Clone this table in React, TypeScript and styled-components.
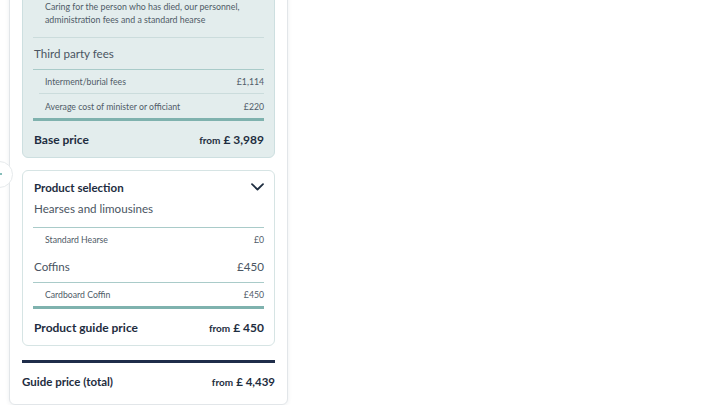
import React from 'react'
import styled, { createGlobalStyle } from 'styled-components'

const GlobalStyle = createGlobalStyle`
  html, body {
    margin: 0;
    padding: 0;
    background: #ffffff;
    overflow: hidden;
  }
  body {
    font-family: Lato, "Open Sans", sans-serif;
    color: #1e2d40;
  }
`

const UI = {
  Page: styled.div`
    position: relative;
    width: 720px;
    height: 405px;
    overflow: hidden;
  `,
  Card: styled.section`
    margin: -40px 0 0 9px;
    width: 279px;
    box-sizing: border-box;
    padding: 0 12px 4px;
    background: #fff;
    border: 1px solid #e2e6e9;
    border-radius: 6px;
    box-shadow: 0 1px 4px rgba(30, 45, 64, 0.08);
  `,
  Panel: styled.div<{ $tinted?: boolean }>`
    box-sizing: border-box;
    padding: 0 10px;
    border: 1px solid ${({ $tinted }) => ($tinted ? '#cddfe0' : '#d6e4e4')};
    border-radius: 6px;
    background: ${({ $tinted }) => ($tinted ? '#e3eded' : '#ffffff')};
    margin-bottom: 12px;
  `,
  Intro: styled.p`
    margin: 0;
    padding: 38px 0 11px 12px;
    font-size: 8.8px;
    line-height: 13px;
    color: #4f5b67;
  `,
  Row: styled.div<{ $indent?: 'inset' | 'full'; $line?: 'thin' | 'thick' | 'faint' | 'none' }>`
    display: flex;
    justify-content: space-between;
    align-items: center;
    margin-left: ${({ $indent }) => ($indent === 'inset' ? '6px' : '0')};
    padding-left: ${({ $indent }) => ($indent === 'inset' ? '6px' : $indent === 'full' ? '12px' : '1px')};
    border-top: ${({ $line }) =>
      $line === 'thick'
        ? '3px solid #7fb2ae'
        : $line === 'thin'
        ? '1.5px solid #a9cbc9'
        : $line === 'faint'
        ? '1px solid #cbdcdc'
        : 'none'};
  `,
  Heading: styled.span`
    font-size: 11.6px;
    color: #4a5562;
  `,
  Small: styled.span`
    font-size: 8.7px;
    color: #4f5b67;
  `,
  Bold: styled.span<{ $size?: number }>`
    font-size: ${({ $size }) => $size || 12}px;
    font-weight: 700;
    color: #1e2d40;
  `,
  Price: styled.span`
    display: inline-flex;
    align-items: baseline;
    gap: 3px;
  `,
  From: styled.span`
    font-size: 10px;
    font-weight: 700;
    color: #1e2d40;
  `,
  Total: styled.div`
    display: flex;
    justify-content: space-between;
    align-items: center;
    height: 37px;
    margin-top: 14px;
    border-top: 3px solid #1f2d4a;
  `,
  Toggle: styled.button`
    border: 0;
    background: none;
    padding: 0;
    width: 14px;
    height: 14px;
    display: flex;
    align-items: center;
    justify-content: center;
    color: #1e2d40;
  `,
  Nav: styled.div`
    position: absolute;
    left: -14px;
    top: 161px;
    width: 25px;
    height: 25px;
    border-radius: 50%;
    border: 1px solid #e6eaec;
    background: #fff;
    &::after {
      content: '';
      position: absolute;
      left: 13px;
      top: 11px;
      width: 2px;
      height: 2px;
      border-radius: 50%;
      background: #5fa8a3;
    }
  `
}

const Price = ({ value, size = 12 }: { value: string; size?: number }) => (
  <UI.Price>
    <UI.From>from</UI.From>
    <UI.Bold $size={size}>£ {value}</UI.Bold>
  </UI.Price>
)

const App = () => (
  <UI.Page>
    <GlobalStyle />
    <UI.Card>
      <UI.Panel $tinted>
        <UI.Intro>
          Caring for the person who has died, our personnel,
          <br />
          administration fees and a standard hearse
        </UI.Intro>
        <UI.Row $line="faint" style={{ height: 31 }}>
          <UI.Heading>Third party fees</UI.Heading>
        </UI.Row>
        <UI.Row $indent="full" $line="thin" style={{ height: 23 }}>
          <UI.Small>Interment/burial fees</UI.Small>
          <UI.Small>£1,114</UI.Small>
        </UI.Row>
        <UI.Row $indent="inset" $line="faint" style={{ height: 24 }}>
          <UI.Small>Average cost of minister or officiant</UI.Small>
          <UI.Small>£220</UI.Small>
        </UI.Row>
        <UI.Row $line="thick" style={{ height: 36 }}>
          <UI.Bold>Base price</UI.Bold>
          <Price value="3,989" />
        </UI.Row>
      </UI.Panel>

      <UI.Panel>
        <UI.Row style={{ height: 30, paddingTop: 1 }}>
          <UI.Bold $size={11.5}>Product selection</UI.Bold>
          <UI.Toggle aria-label="Collapse">
            <svg width="13" height="8" viewBox="0 0 13 8" fill="none">
              <path d="M1 1.2 6.5 6.5 12 1.2" stroke="#1e2d40" strokeWidth="1.8" strokeLinecap="round" strokeLinejoin="round" />
            </svg>
          </UI.Toggle>
        </UI.Row>
        <UI.Row style={{ height: 25, alignItems: 'flex-start' }}>
          <UI.Heading>Hearses and limousines</UI.Heading>
        </UI.Row>
        <UI.Row $indent="full" $line="thin" style={{ height: 23 }}>
          <UI.Small>Standard Hearse</UI.Small>
          <UI.Small>£0</UI.Small>
        </UI.Row>
        <UI.Row style={{ height: 31 }}>
          <UI.Heading>Coffins</UI.Heading>
          <UI.Heading>£450</UI.Heading>
        </UI.Row>
        <UI.Row $indent="full" $line="thin" style={{ height: 23 }}>
          <UI.Small>Cardboard Coffin</UI.Small>
          <UI.Small>£450</UI.Small>
        </UI.Row>
        <UI.Row $line="thick" style={{ height: 36 }}>
          <UI.Bold>Product guide price</UI.Bold>
          <Price value="450" />
        </UI.Row>
      </UI.Panel>

      <UI.Total>
        <UI.Bold $size={11.5}>Guide price (total)</UI.Bold>
        <Price value="4,439" size={11.5} />
      </UI.Total>
    </UI.Card>
    <UI.Nav />
  </UI.Page>
)

export default App
